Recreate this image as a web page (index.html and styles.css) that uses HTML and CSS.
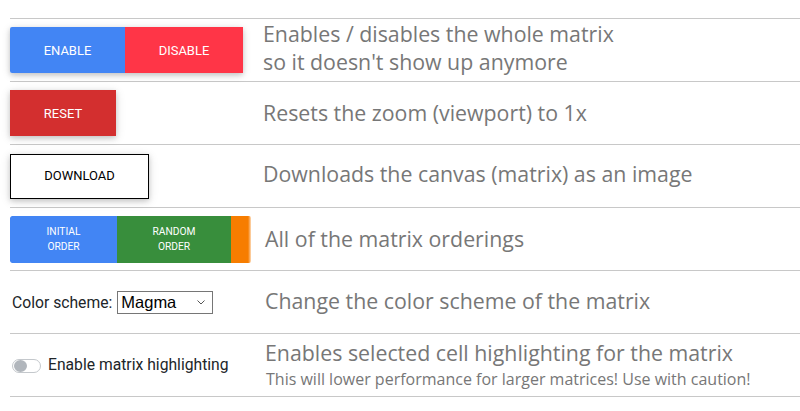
FILE: index.html
```html
<!DOCTYPE html>
<html>
<head>
<meta charset="utf-8">
<link rel="stylesheet" href="styles.css">
</head>
<body>
<div class="table">
  <div class="row">
    <div class="ctrl">
      <div class="group">
        <button class="btn btn-blue first">Enable</button>
        <button class="btn btn-pink last">Disable</button>
      </div>
    </div>
    <div class="desc desc-two">Enables / disables the whole matrix<br>so it doesn't show up anymore</div>
  </div>
  <div class="row">
    <div class="ctrl">
      <button class="btn btn-red">Reset</button>
    </div>
    <div class="desc">Resets the zoom (viewport) to 1x</div>
  </div>
  <div class="row">
    <div class="ctrl">
      <button class="btn btn-outline">Download</button>
    </div>
    <div class="desc desc-up">Downloads the canvas (matrix) as an image</div>
  </div>
  <div class="row">
    <div class="ctrl ctrl-wide">
      <div class="group group-clip">
        <button class="btn btn-sm btn-blue first">Initial<br>order</button>
        <button class="btn btn-sm btn-green">Random<br>order</button>
        <span class="btn-orange"></span>
      </div>
    </div>
    <div class="desc">All of the matrix orderings</div>
  </div>
  <div class="row">
    <div class="ctrl ctrl-form">
      <label class="form-label">Color scheme:</label>
      <span class="select-wrap">
        <select class="scheme">
          <option>Magma</option>
        </select>
        <svg class="chevron" width="8" height="5" viewBox="0 0 8 5"><path d="M0.5 0.5 L4 4 L7.5 0.5" fill="none" stroke="#555" stroke-width="1"/></svg>
      </span>
    </div>
    <div class="desc desc-up2">Change the color scheme of the matrix</div>
  </div>
  <div class="row">
    <div class="ctrl ctrl-form">
      <span class="switch"><span class="knob"></span></span>
      <span class="switch-label">Enable matrix highlighting</span>
    </div>
    <div class="desc desc-note">Enables selected cell highlighting for the matrix<span class="note">This will lower performance for larger matrices! Use with caution!</span></div>
  </div>
</div>
</body>
</html>
```

FILE: styles.css
```css
html, body {
  margin: 0;
  padding: 0;
  background: #fff;
  overflow: hidden;
}

.table {
  padding-top: 18px;
  margin-left: 10px;
}

.row {
  display: flex;
  align-items: center;
  height: 62px;
  border-top: 1px solid #c8c8c8;
}

.row:last-child {
  border-bottom: 1px solid #c8c8c8;
}

.ctrl {
  flex: none;
  width: 253px;
  display: flex;
  align-items: center;
}

.ctrl-wide {
  width: 255px;
}

.desc {
  font-family: "Open Sans", sans-serif;
  font-size: 21.33px;
  line-height: 28px;
  color: #777;
  white-space: nowrap;
}

.desc-two {
  line-height: 27.6px;
  padding-bottom: 4px;
}

.desc-up {
  padding-bottom: 5px;
}

.desc-up2 {
  padding-bottom: 2px;
}

.desc-note {
  align-self: flex-start;
  padding-top: 6px;
  line-height: 26px;
}

.note {
  display: block;
  margin-top: 2px;
  font-size: 16px;
  line-height: 22px;
  padding-left: 1px;
}

.group {
  display: flex;
  box-shadow: 0 2px 5px 0 rgba(0,0,0,.16), 0 2px 10px 0 rgba(0,0,0,.12);
  border-radius: 2px;
}

.group .btn {
  box-shadow: none;
}

.group-clip {
  width: 241px;
  overflow: hidden;
  box-shadow: none;
}

.btn {
  flex: none;
  font-family: Roboto, sans-serif;
  font-size: 12.96px;
  line-height: 19.4px;
  text-transform: uppercase;
  color: #fff;
  border: 0;
  margin: 0;
  padding: 14px 0 12.8px;
  height: 46px;
  border-radius: 0;
  box-shadow: 0 2px 5px 0 rgba(0,0,0,.16), 0 2px 10px 0 rgba(0,0,0,.12);
  cursor: pointer;
}

.btn.first {
  border-radius: 2px 0 0 2px;
}

.btn-blue { background: #4285f4; }
.btn-pink { background: #ff3547; width: 118px; }
.btn-red { background: #d32f2f; width: 106px; }
.btn-green { background: #388e3c; }

.btn-orange {
  flex: none;
  width: 20px;
  height: 47px;
  background: linear-gradient(to right, #f77d00 0, #f77d00 17px, #fbb56f 19px, #fde0c2 20px);
}

.btn-blue.first { width: 115px; }

.btn-outline {
  background: #fff;
  color: #000;
  border: 1px solid #000;
  width: 139px;
  height: 45px;
  padding: 0;
  margin-top: 0;
}

.btn-sm {
  font-size: 10.24px;
  line-height: 15.4px;
  padding: 8px 0;
  height: 47px;
}

.btn-sm.btn-blue.first { width: 107px; }
.btn-sm.btn-green { width: 114px; }

.ctrl-form {
  padding-left: 2px;
  font-family: Roboto, sans-serif;
  font-size: 15.7px;
  color: #212529;
}

.form-label {
  margin-right: 5px;
}

.select-wrap {
  position: relative;
  display: inline-flex;
}

.scheme {
  -webkit-appearance: none;
  appearance: none;
  width: 96px;
  height: 23px;
  font-family: "Liberation Sans", Arial, sans-serif;
  font-size: 16.5px;
  color: #000;
  background: #fff;
  border: 1px solid #767676;
  border-radius: 0;
  padding: 0 0 0 3px;
  margin: 0;
}

.chevron {
  position: absolute;
  right: 8px;
  top: 9px;
}

.switch {
  position: relative;
  flex: none;
  width: 27px;
  height: 12px;
  border: 1px solid #c4c8cc;
  border-radius: 7px;
  background: #fff;
  margin-right: 7px;
  margin-top: 1px;
}

.knob {
  position: absolute;
  left: 1px;
  top: 0;
  width: 13px;
  height: 12px;
  border-radius: 50%;
  background: #b1b6bc;
}

.switch-label {
  line-height: 22px;
}
```
